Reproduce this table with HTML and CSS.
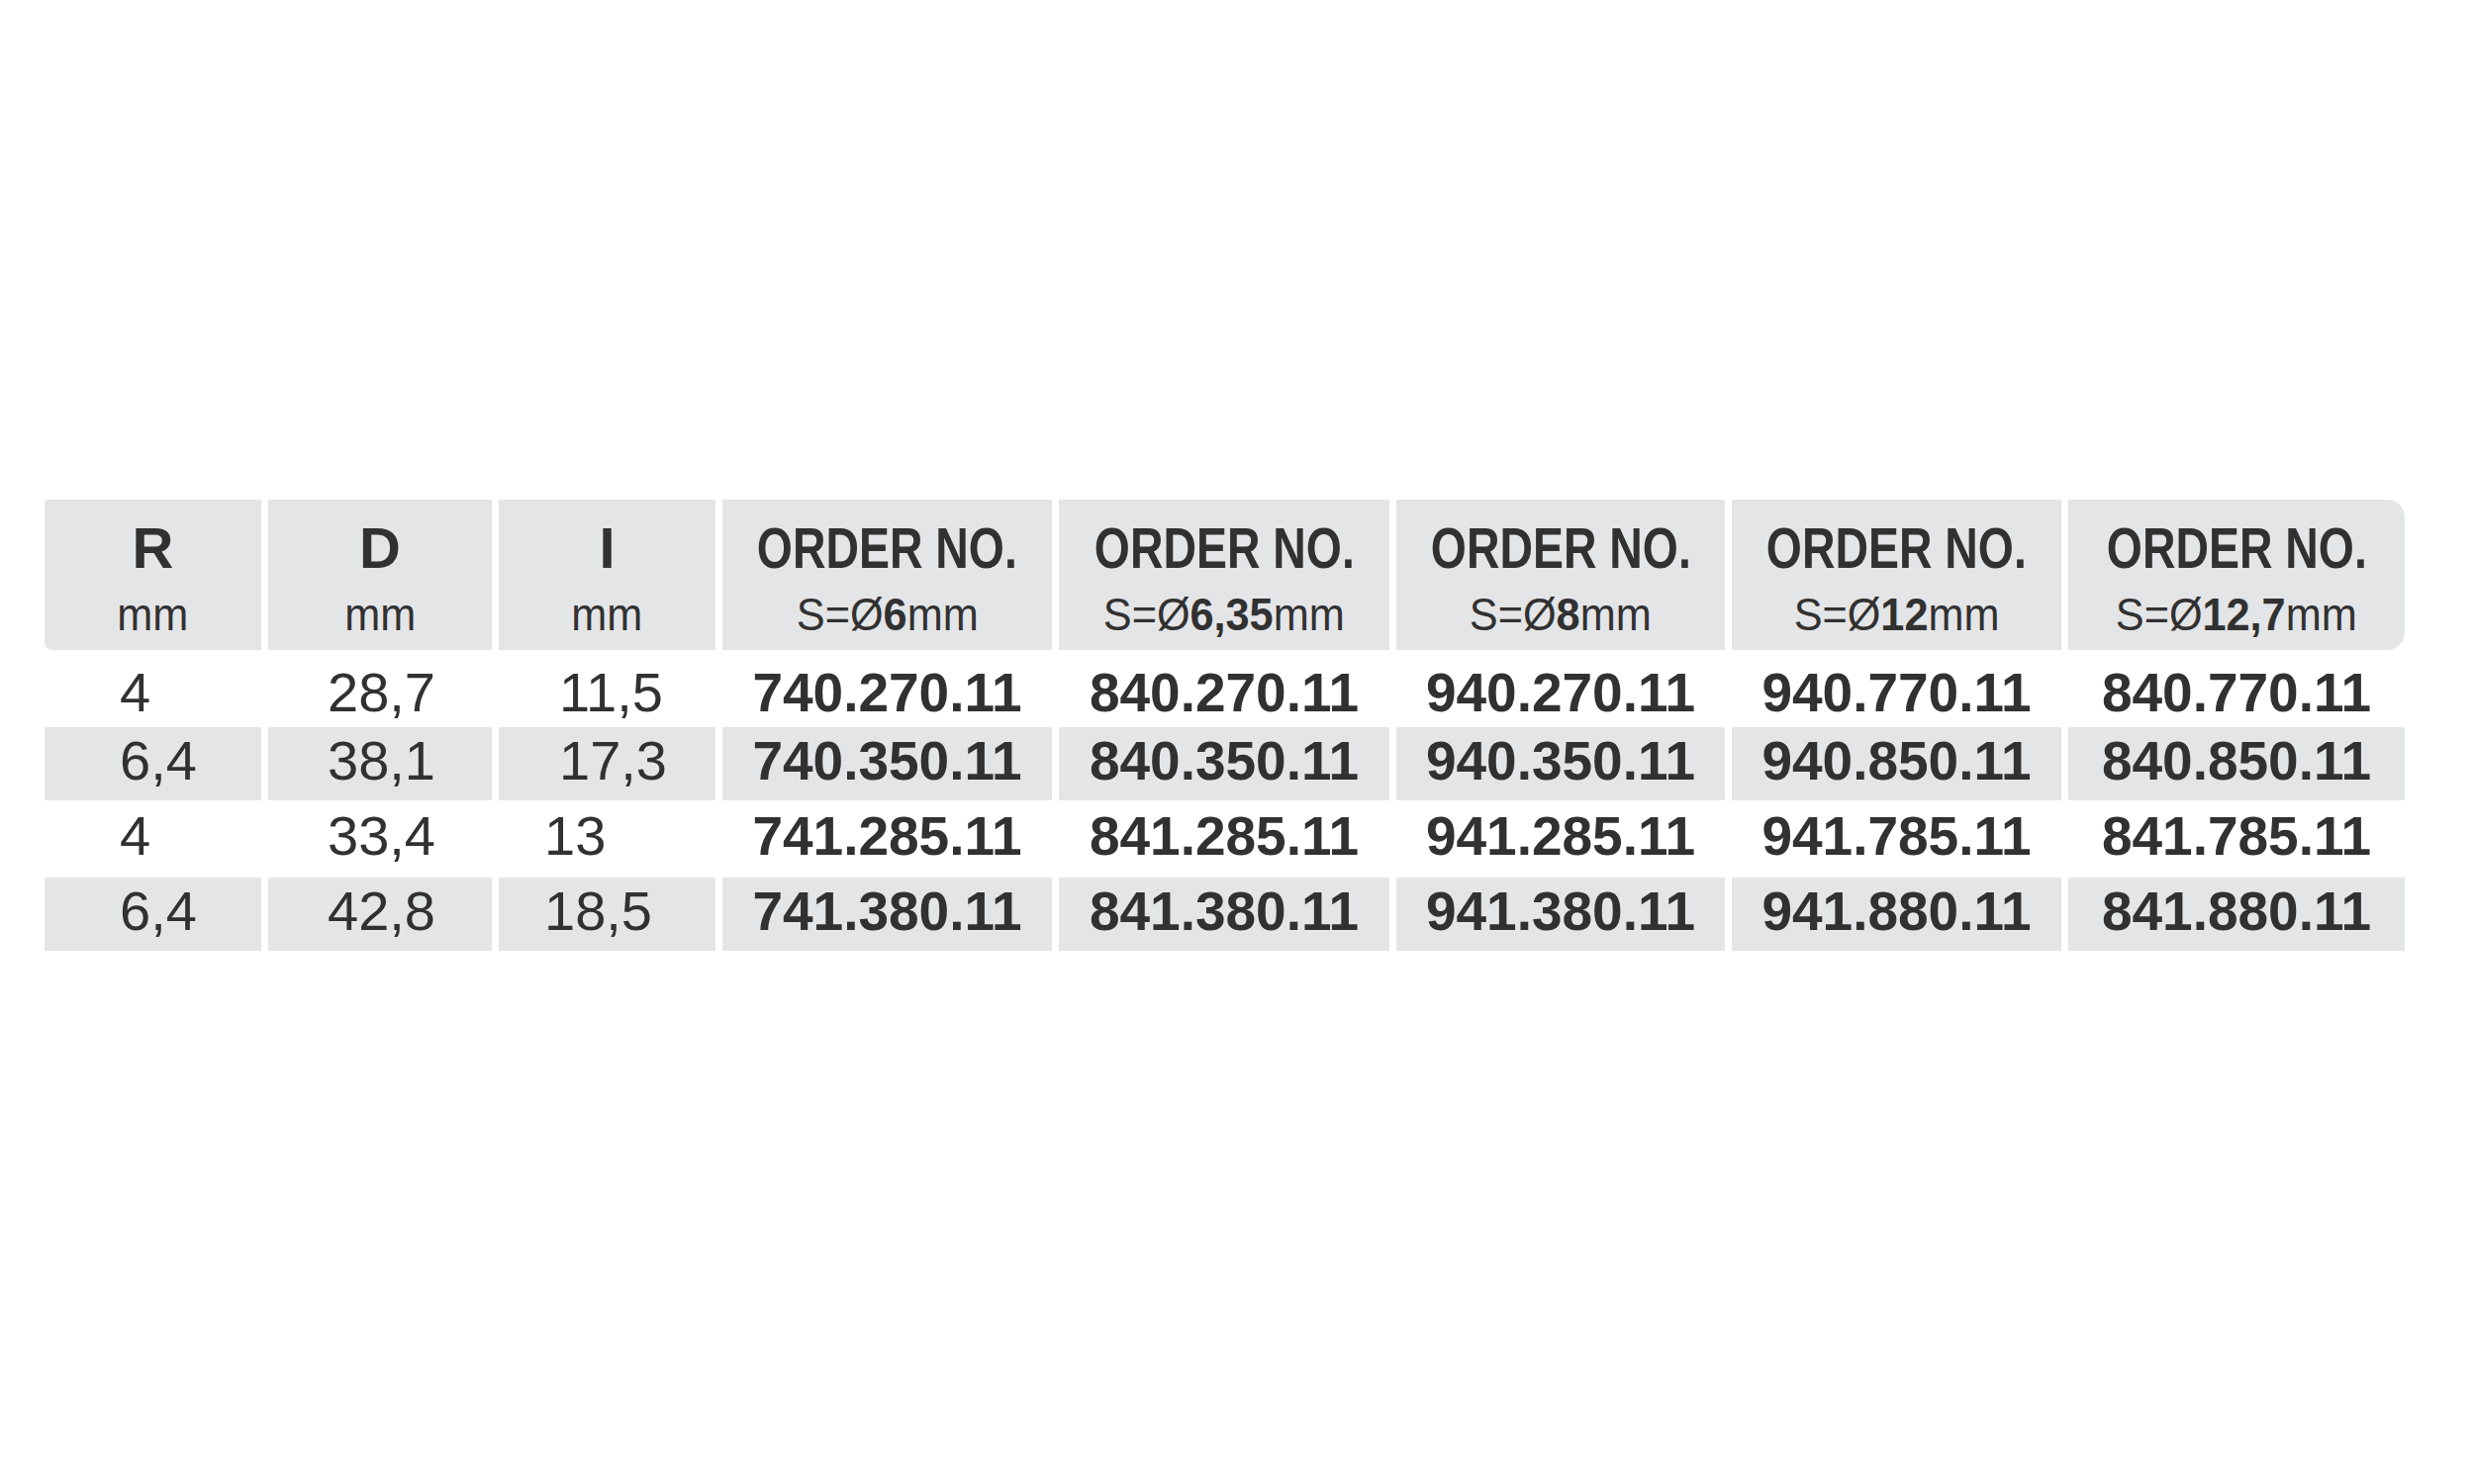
FILE: index.html
```html
<!DOCTYPE html>
<html lang="en">
<head>
<meta charset="utf-8">
<title>Order numbers</title>
<link rel="stylesheet" href="styles.css">
</head>
<body>
<main class="page">
  <div class="table">
    <div class="th first"><div class="t">R</div><div class="s">mm</div></div>
    <div class="th"><div class="t">D</div><div class="s">mm</div></div>
    <div class="th"><div class="t">I</div><div class="s">mm</div></div>
    <div class="th"><div class="t narrow">ORDER NO.</div><div class="s">S=Ø<b>6</b>mm</div></div>
    <div class="th"><div class="t narrow">ORDER NO.</div><div class="s">S=Ø<b>6,35</b>mm</div></div>
    <div class="th"><div class="t narrow">ORDER NO.</div><div class="s">S=Ø<b>8</b>mm</div></div>
    <div class="th"><div class="t narrow">ORDER NO.</div><div class="s">S=Ø<b>12</b>mm</div></div>
    <div class="th last"><div class="t narrow">ORDER NO.</div><div class="s">S=Ø<b>12,7</b>mm</div></div>

    <div class="td r1 c1">4</div>
    <div class="td r1 c2">28,7</div>
    <div class="td r1 c3">11,5</div>
    <div class="td r1 ord">740.270.11</div>
    <div class="td r1 ord">840.270.11</div>
    <div class="td r1 ord">940.270.11</div>
    <div class="td r1 ord">940.770.11</div>
    <div class="td r1 ord">840.770.11</div>

    <div class="td alt c1">6,4</div>
    <div class="td alt c2">38,1</div>
    <div class="td alt c3">17,3</div>
    <div class="td alt ord">740.350.11</div>
    <div class="td alt ord">840.350.11</div>
    <div class="td alt ord">940.350.11</div>
    <div class="td alt ord">940.850.11</div>
    <div class="td alt ord">840.850.11</div>

    <div class="td c1">4</div>
    <div class="td c2">33,4</div>
    <div class="td c3 left">13</div>
    <div class="td ord">741.285.11</div>
    <div class="td ord">841.285.11</div>
    <div class="td ord">941.285.11</div>
    <div class="td ord">941.785.11</div>
    <div class="td ord">841.785.11</div>

    <div class="td alt c1">6,4</div>
    <div class="td alt c2">42,8</div>
    <div class="td alt c3 left">18,5</div>
    <div class="td alt ord">741.380.11</div>
    <div class="td alt ord">841.380.11</div>
    <div class="td alt ord">941.380.11</div>
    <div class="td alt ord">941.880.11</div>
    <div class="td alt ord">841.880.11</div>
  </div>
</main>
</body>
</html>
```

FILE: styles.css
```css
html, body {
  margin: 0;
  padding: 0;
  background: #ffffff;
}

body {
  font-family: "Liberation Sans", Arial, sans-serif;
  color: #313131;
}

.page {
  padding: 505px 0 0 45px;
}

.table {
  display: grid;
  grid-template-columns: 219px 226px 219px 333px 334px 332px 333px 340px;
  grid-template-rows: 152px 74px 74px 74px 74px;
  column-gap: 7px;
  row-gap: 2px;
}

.th {
  background: #e4e5e7;
  display: flex;
  flex-direction: column;
  align-items: center;
  padding-top: 16px;
  box-sizing: border-box;
}

.th.first {
  border-radius: 4px 0 0 8px;
}

.th.last {
  border-radius: 0 18px 18px 0;
}

.t {
  font-weight: 700;
  font-size: 58px;
  line-height: 66px;
  height: 66px;
  white-space: nowrap;
}

.narrow {
  transform: scaleX(0.8);
}

.s {
  margin-top: 9px;
  font-size: 46px;
  line-height: 50px;
  font-weight: 400;
  white-space: nowrap;
  transform: scaleX(0.94);
}

.s b {
  font-weight: 700;
}

.td {
  display: flex;
  align-items: center;
  font-size: 56px;
  line-height: 60px;
  padding-bottom: 6px;
  box-sizing: border-box;
  white-space: nowrap;
}

.td.r1 {
  padding-bottom: 0;
  padding-top: 8px;
}

.td.alt {
  background: #e4e5e7;
}

.c1 {
  padding-left: 76px;
}

.c2 {
  padding-left: 60px;
}

.c3 {
  padding-left: 61px;
}

.c3.left {
  padding-left: 46px;
}

.ord {
  justify-content: center;
  font-weight: 700;
  font-size: 55px;
}
```
